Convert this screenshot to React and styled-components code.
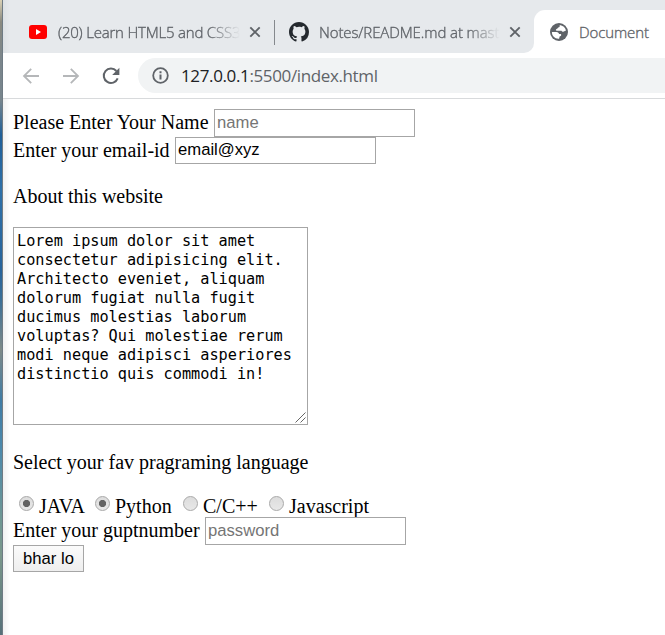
import React from "react";
import styled, { createGlobalStyle } from "styled-components";

const GlobalStyle = createGlobalStyle`
  * { box-sizing: border-box; }
  body { margin: 0; background: #fff; overflow: hidden; }
`;

const Screen = styled.div`
  display: grid;
  grid-template-columns: 3px 1fr;
  width: 665px;
  height: 635px;
  overflow: hidden;
  background: #fff;
`;

const DesktopEdge = styled.div`
  border-right: 1px solid #6f7b84;
  background: linear-gradient(#d9d0b4 0, #8a8a80 22px, #7b868c 60px, #77858d 100px, #1f5f98 135px, #2e70a8 190px, #28649b 270px, #3c7097 300px, #7e8a88 350px, #3f7ba4 400px, #4c89ab 450px, #6f9793 520px, #7a978b 555px, #566f78 635px);
`;

const Browser = styled.div`
  display: flex;
  flex-direction: column;
  min-width: 0;
`;

const TabStrip = styled.div`
  display: flex;
  align-items: flex-end;
  height: 53px;
  flex: none;
  background: linear-gradient(90deg, #dde1e4, #e6e9ec 7px);
`;

const Tab = styled.div`
  display: flex;
  align-items: center;
  height: 43px;
  width: ${(p) => p.$width}px;
  flex: none;
  padding-left: ${(p) => p.$inset}px;
  background: ${(p) => (p.$active ? "#fff" : "transparent")};
  border-radius: ${(p) => (p.$active ? "11px 0 0 0" : p.$curved ? "0 0 10px 0" : "0")};
`;

const ActiveBacking = styled.div`
  display: flex;
  height: 43px;
  flex: none;
  background: linear-gradient(#e6e9ec 50%, #fff 50%);
`;

const CurvedTab = styled(Tab)`
  background: #e6e9ec;
`;

const TabTitle = styled.span`
  font: 15px/20px "Open Sans", "Noto Sans", sans-serif;
  font-weight: 300;
  -webkit-text-stroke: 0.35px #5f6368;
  letter-spacing: ${(p) => p.$track}px;
  color: #5f6368;
  white-space: nowrap;
  width: ${(p) => p.$width}px;
  margin-left: ${(p) => p.$gap}px;
  ${(p) => p.$fade && "mask-image: linear-gradient(90deg, #000 calc(100% - 32px), transparent);"}
`;

const CloseIcon = styled.svg`
  width: 12px;
  height: 12px;
  margin-left: 9px;
  flex: none;
`;

const TabDivider = styled.div`
  width: 1px;
  height: 25px;
  margin-bottom: 8px;
  background: #85898d;
  flex: none;
`;

const Toolbar = styled.div`
  display: flex;
  align-items: center;
  height: 46px;
  flex: none;
  padding-left: 18px;
  border-bottom: 1px solid #d8dadc;
`;

const NavIcon = styled.svg`
  width: 20px;
  height: 20px;
  margin-right: ${(p) => p.$after}px;
  flex: none;
`;

const AddressBar = styled.div`
  display: flex;
  align-items: center;
  flex: 1;
  height: 35px;
  padding-left: 14px;
  border-radius: 18px 0 0 18px;
  background: #f1f3f4;
`;

const Url = styled.span`
  margin-left: 12px;
  font: 17px/24px "Open Sans", "Noto Sans", sans-serif;
  letter-spacing: ${(p) => p.$track || 0}px;
  color: #5f6368;
  white-space: nowrap;
`;

const Host = styled.span`
  color: #202124;
`;

const Page = styled.form`
  flex: 1;
  padding: 10px 0 0 10px;
  background: linear-gradient(90deg, #f1f1f1, #fff 7px);
  font: 20px/23px "Liberation Serif", "Times New Roman", serif;
  color: #000;
`;

const FieldRow = styled.div`
  display: flex;
  height: ${(p) => p.$height}px;
  gap: 5px;
`;

const Label = styled.label`
  width: ${(p) => p.$width}px;
  padding-top: 2px;
  white-space: nowrap;
`;

const TextInput = styled.input`
  width: 201px;
  height: 100%;
  margin: 0;
  padding: 1px 1px 2px 2px;
  border: 1px solid #a6a6a6;
  border-radius: 0;
  outline: none;
  background: #fff;
  font: 16.67px "Liberation Sans", Arial, sans-serif;
  color: #000;
  &::placeholder { color: #757575; }
`;

const Heading = styled.p`
  height: 23px;
  margin: ${(p) => p.$top}px 0 ${(p) => p.$bottom}px;
`;

const AreaFrame = styled.div`
  position: relative;
  width: 295px;
  height: 198px;
`;

const Area = styled.textarea`
  display: block;
  width: 100%;
  height: 100%;
  margin: 0;
  padding: 4px 2px 2px 3px;
  border: 1px solid #a6a6a6;
  border-radius: 0;
  outline: none;
  resize: none;
  overflow: hidden;
  background: #fff;
  white-space: pre;
  font: 15.22px/19px "DejaVu Sans Mono", monospace;
  color: #000;
`;

const ResizeGrip = styled.svg`
  position: absolute;
  right: 2px;
  bottom: 2px;
  width: 11px;
  height: 11px;
`;

const Choices = styled.div`
  display: flex;
  height: 22px;
  padding-left: 6px;
`;

const Choice = styled.label`
  display: flex;
  width: ${(p) => p.$width}px;
  gap: 5px;
  line-height: 23px;
  white-space: nowrap;
`;

const Radio = styled.input`
  appearance: none;
  width: 15px;
  height: 15px;
  flex: none;
  margin: 1px 0 0;
  border: 1px solid #a9a9a9;
  border-radius: 50%;
  background: ${(p) => (p.defaultChecked ? "radial-gradient(circle, #636363 3.2px, transparent 4px), " : "")}linear-gradient(#dcdcdc, #e8e8e8);
`;

const SubmitButton = styled.button`
  display: block;
  width: 71px;
  height: 27px;
  padding: 0;
  border: 1px solid #a6a6a6;
  border-radius: 0;
  background: linear-gradient(#fbfbfb, #eee);
  font: 16.67px "Liberation Sans", Arial, sans-serif;
  color: #000;
`;

const Close = () => (
  <CloseIcon viewBox="0 0 12 12">
    <path d="M1.3 1.3 10.7 10.7M10.7 1.3 1.3 10.7" stroke="#5f6368" strokeWidth="1.9" />
  </CloseIcon>
);

const LOREM = `Lorem ipsum dolor sit amet
consectetur adipisicing elit.
Architecto eveniet, aliquam
dolorum fugiat nulla fugit
ducimus molestias laborum
voluptas? Qui molestiae rerum
modi neque adipisci asperiores
distinctio quis commodi in!`;

const languages = [
  { name: "JAVA", width: 76, checked: true },
  { name: "Python", width: 88, checked: true },
  { name: "C/C++", width: 86, checked: false },
  { name: "Javascript", width: 110, checked: false },
];

export default function App() {
  return (
    <Screen>
      <GlobalStyle />
      <DesktopEdge />
      <Browser>
        <TabStrip>
          <Tab $width={271} $inset={26}>
            <svg width="18" height="14" viewBox="0 0 18 14">
              <rect width="18" height="14" rx="3" fill="#f00" />
              <path d="M7 4 12 7 7 10Z" fill="#fff" />
            </svg>
            <TabTitle $width={182} $gap={11} $track={-0.2} $fade>(20) Learn HTML5 and CSS3</TabTitle>
            <Close />
          </Tab>
          <TabDivider />
          <ActiveBacking>
            <CurvedTab $width={259} $inset={14} $curved>
              <svg width="20" height="20" viewBox="0 0 16 16">
                <path fill="#24292e" d="M8 0C3.58 0 0 3.58 0 8c0 3.54 2.29 6.53 5.47 7.59.4.07.55-.17.55-.38 0-.19-.01-.82-.01-1.49-2.01.37-2.53-.49-2.69-.94-.09-.23-.48-.94-.82-1.13-.28-.15-.68-.52-.01-.53.63-.01 1.08.58 1.23.82.72 1.21 1.87.87 2.33.66.07-.52.28-.87.51-1.07-1.78-.2-3.64-.89-3.64-3.95 0-.87.31-1.59.82-2.15-.08-.2-.36-1.02.08-2.12 0 0 .67-.21 2.2.82A7.7 7.7 0 0 1 8 3.86c.68 0 1.36.09 2 .27 1.53-1.04 2.2-.82 2.2-.82.44 1.1.16 1.92.08 2.12.51.56.82 1.27.82 2.15 0 3.07-1.87 3.75-3.65 3.95.29.25.54.73.54 1.48 0 1.07-.01 1.93-.01 2.2 0 .21.15.46.55.38A8 8 0 0 0 16 8c0-4.42-3.58-8-8-8Z" />
              </svg>
              <TabTitle $width={181} $gap={10} $track={-0.1} $fade>Notes/README.md at mast</TabTitle>
              <Close />
            </CurvedTab>
          </ActiveBacking>
          <Tab $width={131} $inset={16} $active>
            <svg width="18" height="18" viewBox="0 0 18 18">
              <circle cx="9" cy="9" r="9" fill="#5f6368" />
              <path fill="#fff" d="M9.8 1.9C12.9 2.3 15.4 4.6 16 7.6L13.3 8.8C12.2 8.8 12 8.2 11.5 7.7H6.8C5.8 7.7 5.6 6.8 6.2 6.2L7.7 5.3C8 4.4 8.6 4.2 9.5 4Z" />
              <path fill="#fff" d="M1.9 9H6.4C8.3 9 8.8 10 9 11H11.1V12.7L9.6 13.4 9.1 15.7C5.1 16.1 1.8 13 1.9 9Z" />
            </svg>
            <TabTitle $width={85} $gap={11} $track={-0.1}>Document</TabTitle>
          </Tab>
        </TabStrip>
        <Toolbar>
          <NavIcon viewBox="0 0 20 20" $after={20}>
            <path d="M18 10H3.5M10.2 2.8 3 10l7.2 7.2" fill="none" stroke="#b5b7b9" strokeWidth="1.8" />
          </NavIcon>
          <NavIcon viewBox="0 0 20 20" $after={20}>
            <path d="M2 10h14.5M9.8 2.8 17 10l-7.2 7.2" fill="none" stroke="#b5b7b9" strokeWidth="1.8" />
          </NavIcon>
          <NavIcon viewBox="0 0 20 20" $after={17}>
            <path d="M16.7 12.4A7.2 7.2 0 1 1 15.4 5" fill="none" stroke="#5f6368" strokeWidth="2" />
            <path d="M18.4 1.8V9H11.2Z" fill="#5f6368" />
          </NavIcon>
          <AddressBar>
            <svg width="17" height="17" viewBox="0 0 17 17">
              <circle cx="8.5" cy="8.5" r="7.3" fill="none" stroke="#5f6368" strokeWidth="1.8" />
              <path d="M8.5 4.2v2M8.5 7.4v5.2" stroke="#5f6368" strokeWidth="2" />
            </svg>
            <Url $track={-0.37}><Host>127.0.0.1</Host>:5500/index.html</Url>
          </AddressBar>
        </Toolbar>
        <Page>
          <FieldRow $height={28}>
            <Label $width={196}>Please Enter Your Name</Label>
            <TextInput placeholder="name" />
          </FieldRow>
          <FieldRow $height={27}>
            <Label $width={157}>Enter your email-id</Label>
            <TextInput defaultValue="email@xyz" />
          </FieldRow>
          <Heading $top={21} $bottom={19}>About this website</Heading>
          <AreaFrame>
            <Area defaultValue={LOREM} spellCheck={false} />
            <ResizeGrip viewBox="0 0 11 11">
              <path d="M.5 10.5 10.5.5M5.5 10.5l5-5" stroke="#666" fill="none" />
            </ResizeGrip>
          </AreaFrame>
          <Heading $top={26} $bottom={21}>Select your fav pragraming language</Heading>
          <Choices>
            {languages.map((l) => (
              <Choice key={l.name} $width={l.width}>
                <Radio type="radio" defaultChecked={l.checked} />
                <span>{l.name}</span>
              </Choice>
            ))}
          </Choices>
          <FieldRow $height={28}>
            <Label $width={187}>Enter your guptnumber</Label>
            <TextInput type="password" placeholder="password" />
          </FieldRow>
          <SubmitButton type="button">bhar lo</SubmitButton>
        </Page>
      </Browser>
    </Screen>
  );
}
